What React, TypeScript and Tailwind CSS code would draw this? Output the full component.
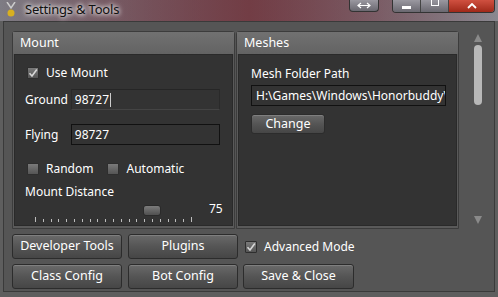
import React from 'react'

const font = { fontFamily: '"Noto Sans", "Open Sans", sans-serif' }

const CheckBox: React.FC<{ checked?: boolean }> = ({ checked }) => (
  <span className="w-[12px] h-[12px] rounded-[1px] border border-[#2e2e2e] bg-gradient-to-b from-[#7a7a7a] to-[#555] flex items-center justify-center shrink-0">
    {checked && (
      <svg width="10" height="10" viewBox="0 0 10 10">
        <path d="M1.5 5.2 L4 8 L8.8 1.5" stroke="#d8d8d8" strokeWidth="1.6" fill="none" />
      </svg>
    )}
  </span>
)

const Btn: React.FC<{ label: string; className?: string }> = ({ label, className }) => (
  <button
    className={
      'h-[25px] rounded-[3px] border border-[#2c2c2c] bg-gradient-to-b from-[#6a6a6a] via-[#555] to-[#464646] text-[12.5px] text-white shadow-[inset_0_1px_0_rgba(255,255,255,0.15)] ' +
      (className || '')
    }
  >
    {label}
  </button>
)

const GroupBox: React.FC<{ title: string; children: React.ReactNode }> = ({ title, children }) => (
  <div className="w-[223px] flex flex-col border border-[#3c3c3c] rounded-t-[3px] bg-[#5a5a5a]">
    <div className="h-[22px] bg-gradient-to-b from-[#717171] to-[#636363] flex items-center px-[7px] text-[12.5px] text-white">
      {title}
    </div>
    <div className="flex-1 mx-[1px] mb-[2px] bg-[#333333] border border-[#2a2a2a]">{children}</div>
  </div>
)

const Ticks: React.FC = () => (
  <div className="flex justify-between w-[157px] items-end h-[5px]">
    {Array.from({ length: 21 }).map((_, i) => (
      <span key={i} className={'w-[1px] bg-[#bdbdbd] ' + (i === 0 || i === 20 ? 'h-[5px]' : 'h-[3px]')} />
    ))}
  </div>
)

const App: React.FC = () => {
  return (
    <div className="w-[498px] h-[297px] flex flex-col overflow-hidden bg-[#5e5e5e]" style={font}>
      {/* title bar */}
      <div className="h-[21px] flex items-start bg-gradient-to-r from-[#7e7c84] via-[#6a5060] to-[#8a8890] relative">
        <div className="absolute inset-0 bg-gradient-to-r from-transparent via-[#7a2a2a]/50 to-transparent" />
        <div className="relative flex items-center h-[19px] pl-[5px] gap-[8px]">
          <svg width="12" height="16" viewBox="0 0 12 16">
            <path d="M2 0 L6 6 L10 0" stroke="#ccc" strokeWidth="1.5" fill="none" />
            <circle cx="6" cy="11" r="3.5" fill="#d8b020" />
          </svg>
          <span
            className="text-[13px] text-[#111] leading-none tracking-[-0.2px]"
            style={{ textShadow: '0 0 6px #fff, 0 0 4px #fff' }}
          >
            Settings &amp; Tools
          </span>
        </div>
        <div className="relative ml-auto flex items-start pr-[3px]">
          <div className="w-[30px] h-[12px] rounded-b-[4px] border border-t-0 border-[#333] bg-gradient-to-b from-[#9a98a0] to-[#6a6870] flex items-center justify-center">
            <svg width="14" height="7" viewBox="0 0 14 7">
              <path d="M1 3.5 H13 M4 1 L1 3.5 L4 6 M10 1 L13 3.5 L10 6" stroke="#fff" strokeWidth="1.2" fill="none" />
            </svg>
          </div>
          <div className="ml-[13px] flex rounded-b-[4px] border border-t-0 border-[#333] overflow-hidden">
            <div className="w-[28px] h-[12px] bg-gradient-to-b from-[#9a98a0] to-[#6a6870] border-r border-[#444] flex items-center justify-center">
              <span className="w-[9px] h-[3px] bg-white mt-[2px]" />
            </div>
            <div className="w-[28px] h-[12px] bg-gradient-to-b from-[#9a98a0] to-[#6a6870] border-r border-[#444] flex items-start justify-center">
              <span className="w-[8px] h-[6px] border border-t-0 border-white" />
            </div>
            <div className="w-[45px] h-[12px] bg-gradient-to-b from-[#d05040] to-[#a02818] flex items-center justify-center">
              <svg width="10" height="6" viewBox="0 0 10 6">
                <path d="M1 5 L5 1 L9 5" stroke="#fff" strokeWidth="1.8" fill="none" />
              </svg>
            </div>
          </div>
        </div>
      </div>

      {/* body */}
      <div className="flex-1 px-[3px] pb-[5px]">
        <div className="h-full border border-[#3a3a3a] bg-[#555555] flex flex-col pl-[8px] pt-[9px]">
          <div className="flex h-[198px]">
            <GroupBox title="Mount">
              <div className="pl-[12px] pr-[12px] pt-[11px] text-[12px] text-white">
                <div className="flex items-center gap-[7px] h-[14px]">
                  <CheckBox checked />
                  <span>Use Mount</span>
                </div>
                <div className="flex items-center mt-[9px]">
                  <span className="w-[46px] -ml-[2px]">Ground</span>
                  <div className="w-[150px] h-[21px] border border-[#2a2a2a] border-t-[#262626] border-b-[#444] bg-[#333] flex items-center pl-[3px]">
                    98727<span className="w-[1px] h-[14px] bg-[#ccc] ml-[1px]" />
                  </div>
                </div>
                <div className="flex items-center mt-[14px]">
                  <span className="w-[46px] -ml-[2px]">Flying</span>
                  <div className="w-[150px] h-[21px] border border-[#111] bg-[#333] flex items-center pl-[3px]">
                    98727
                  </div>
                </div>
                <div className="flex items-center mt-[17px] h-[14px]">
                  <CheckBox />
                  <span className="ml-[7px]">Random</span>
                  <span className="ml-[14px]"><CheckBox /></span>
                  <span className="ml-[7px]">Automatic</span>
                </div>
                <div className="mt-[7px] -ml-[2px]">Mount Distance</div>
                <div className="flex items-end mt-[-1px] pl-[8px]">
                  <div className="flex flex-col">
                    <div className="h-[11px] pl-[108px]">
                      <span className="block w-[18px] h-[11px] rounded-[3px] border border-[#2a2a2a] bg-gradient-to-b from-[#7c7c7c] to-[#505050]" />
                    </div>
                    <div className="mt-[1px]">
                      <Ticks />
                    </div>
                  </div>
                  <span className="ml-[17px] mb-[4px]">75</span>
                </div>
              </div>
            </GroupBox>
            <div className="w-[1px]" />
            <GroupBox title="Meshes">
              <div className="px-[12px] pt-[10px] text-[12px] text-white">
                <div>Mesh Folder Path</div>
                <div className="mt-[2px] w-[195px] h-[21px] border border-[#111] bg-[#333] flex items-center pl-[4px] overflow-hidden whitespace-nowrap">
                  H:\Games\Windows\Honorbuddy\Meshes
                </div>
                <Btn label="Change" className="mt-[8px] w-[74px] !h-[20px]" />
              </div>
            </GroupBox>
            {/* scrollbar */}
            <div className="flex-1 flex flex-col items-center pt-[2px] pl-[2px]">
              <svg width="10" height="10" viewBox="0 0 10 10">
                <path d="M5 1 L9 9 H1 Z" fill="#8a8a8a" />
              </svg>
              <div className="w-[8px] h-[60px] rounded-[4px] bg-[#b8b8b8] mt-[2px]" />
              <div className="flex-1" />
              <svg width="10" height="10" viewBox="0 0 10 10" className="mb-[4px]">
                <path d="M1 1 H9 L5 9 Z" fill="#8a8a8a" />
              </svg>
            </div>
          </div>
          <div className="flex items-center gap-[6px] mt-[5px]">
            <Btn label="Developer Tools" className="w-[110px]" />
            <Btn label="Plugins" className="w-[110px]" />
            <div className="flex items-center gap-[7px] text-[12px] text-white ml-[1px]">
              <CheckBox checked />
              <span>Advanced Mode</span>
            </div>
          </div>
          <div className="flex items-center gap-[6px] mt-[5px]">
            <Btn label="Class Config" className="w-[110px]" />
            <Btn label="Bot Config" className="w-[110px]" />
            <Btn label="Save &amp; Close" className="w-[111px] -ml-[1px]" />
          </div>
        </div>
      </div>
    </div>
  )
}

export default App
